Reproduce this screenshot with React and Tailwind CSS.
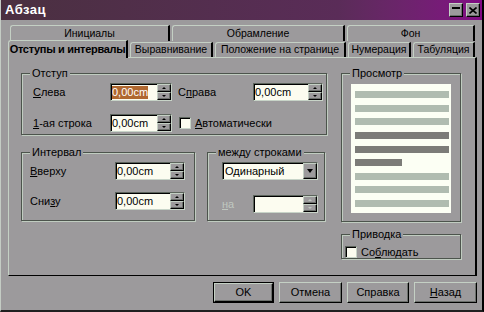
const raised =
  'border border-t-[#c4d0c4] border-l-[#c4d0c4] border-r-black border-b-black shadow-[inset_-1px_-1px_0_#6c706c]';
const sunken =
  'border border-t-[#5c645c] border-l-[#5c645c] border-r-[#c8d4c8] border-b-[#c8d4c8] shadow-[inset_1px_1px_0_#000]';

function Arrow({ up, disabled }) {
  const color = disabled ? 'border-b-[#c0c8c0] border-t-[#c0c8c0]' : 'border-b-black border-t-black';
  return up ? (
    <span className={`w-0 h-0 border-x-[2px] border-x-transparent border-b-[2px] ${color}`} />
  ) : (
    <span className={`w-0 h-0 border-x-[2px] border-x-transparent border-t-[2px] ${color}`} />
  );
}

function Spin({ className = '', value, selected, disabled }) {
  return (
    <div className={`flex h-[18px] bg-[#fcfcf0] ${sunken} ${className}`}>
      <div className="flex-1 flex items-center pl-[1px] overflow-hidden">
        {value && (
          <span className={selected ? 'bg-[#b06830] text-white leading-[13px]' : 'leading-[13px]'}>{value}</span>
        )}
      </div>
      <div className="w-[14px] flex flex-col">
        <div className={`h-[8px] bg-[#9c9a9c] flex items-center justify-center ${raised}`}>
          <Arrow up disabled={disabled} />
        </div>
        <div className={`h-[8px] bg-[#9c9a9c] flex items-center justify-center ${raised}`}>
          <Arrow disabled={disabled} />
        </div>
      </div>
    </div>
  );
}

function Check() {
  return <div className={`w-[12px] h-[12px] shrink-0 bg-[#fcfcf0] ${sunken}`} />;
}

function Group({ title, className = '', children }) {
  return (
    <div className={`relative border border-[#4c544c] shadow-[inset_1px_1px_0_#c0ccc0,1px_1px_0_#c0ccc0] ${className}`}>
      <span className="absolute -top-[8px] left-[8px] bg-[#9c9a9c] px-[2px] leading-[14px]">{title}</span>
      {children}
    </div>
  );
}

function Tab({ className = '', children, active }) {
  return (
    <div
      className={`flex items-center justify-center whitespace-nowrap overflow-hidden bg-[#9c9a9c] border-t border-l border-[#c4d0c4] border-r-2 border-r-black rounded-tl-[3px] ${className} ${
        active ? 'font-bold tracking-[-0.3px] relative z-10' : 'text-[10.5px]'
      }`}
    >
      {children}
    </div>
  );
}

function Button({ className = '', children, primary }) {
  return (
    <div className={`${primary ? 'border border-black' : ''} ${className}`}>
      <div className={`h-full flex items-center justify-center bg-[#9c9a9c] ${raised}`}>{children}</div>
    </div>
  );
}

const lines = [
  { mt: 7, dark: false, w: 94 },
  { mt: 7, dark: false, w: 94 },
  { mt: 6, dark: false, w: 94 },
  { mt: 7, dark: true, w: 94 },
  { mt: 7, dark: true, w: 94 },
  { mt: 6, dark: true, w: 47 },
  { mt: 7, dark: false, w: 94 },
  { mt: 6, dark: false, w: 94 },
  { mt: 7, dark: false, w: 94 },
];

export default function App() {
  return (
    <div className="w-[484px] h-[312px] bg-[#9c9a9c] border-l border-l-[#c4ccc4] border-r-2 border-r-black border-b-2 border-b-[#202020] flex flex-col font-['Liberation_Sans',Arial,sans-serif] text-[11px] text-black select-none">
      {/* title bar */}
      <div className="h-[20px] flex items-center bg-linear-to-r from-[#4a3040] via-[#5a2c58] via-70% to-[#820a84] pl-[4px] pr-[2px]">
        <span className="text-white font-bold text-[13px] tracking-[0.5px]">Абзац</span>
        <div className="ml-auto flex gap-[3px]">
          <div className={`w-[14px] h-[14px] bg-[#9c9a9c] flex justify-center pt-[3px] ${raised}`}>
            <span className="w-[8px] h-[2px] bg-black" />
          </div>
          <div className={`w-[14px] h-[14px] bg-[#9c9a9c] flex items-center justify-center ${raised}`}>
            <svg width="8" height="7" viewBox="0 0 8 7">
              <path d="M0.5 0.5L7.5 6.5M7.5 0.5L0.5 6.5" stroke="#000" strokeWidth="1.6" />
            </svg>
          </div>
        </div>
      </div>

      {/* tabs */}
      <div className="pt-[5px]">
        <div className="flex gap-[2px] pl-[9px] h-[16px]">
          <Tab className="w-[160px]">Инициалы</Tab>
          <Tab className="w-[173px]">Обрамление</Tab>
          <Tab className="w-[128px]">Фон</Tab>
        </div>
        <div className="flex items-start gap-[2px] pl-[7px] h-[16px]">
          <Tab active className="w-[120px] h-[18px] -mt-[1px]">Отступы и интервалы</Tab>
          <Tab className="w-[83px] h-[15px] mt-[1px]">Выравнивание</Tab>
          <Tab className="w-[131px] h-[15px] mt-[1px]">Положение на странице</Tab>
          <Tab className="w-[63px] h-[15px] mt-[1px]">Нумерация</Tab>
          <Tab className="w-[62px] h-[15px] mt-[1px]">Табуляция</Tab>
        </div>
      </div>

      {/* panel */}
      <div className="ml-[7px] w-[469px] h-[219px] border-t border-l border-[#c4d0c4] border-r-2 border-r-black border-b border-b-black flex pl-[12px] pt-[15px]">
        <div className="w-[306px] flex flex-col">
          <Group title="Отступ" className="h-[62px]">
            <div className="flex items-center mt-[9px] pl-[11px]">
              <span className="w-[77px]">
                <u>С</u>лева
              </span>
              <Spin className="w-[62px]" value="0,00cm" selected />
              <span className="w-[75px] ml-[6px]">
                С<u>п</u>рава
              </span>
              <Spin className="w-[70px]" value="0,00cm" />
            </div>
            <div className="flex items-center mt-[13px] pl-[11px]">
              <span className="w-[77px]">
                <u>1</u>-ая строка
              </span>
              <Spin className="w-[62px]" value="0,00cm" />
              <div className="ml-[7px]">
                <Check />
              </div>
              <span className="ml-[4px]">
                <u>А</u>втоматически
              </span>
            </div>
          </Group>

          <div className="flex mt-[17px] gap-[12px]">
            <Group title="Интервал" className="w-[174px] h-[69px]">
              <div className="flex items-center mt-[9px] pl-[8px]">
                <span className="w-[85px]">
                  <u>В</u>верху
                </span>
                <Spin className="w-[70px]" value="0,00cm" />
              </div>
              <div className="flex items-center mt-[12px] pl-[8px]">
                <span className="w-[85px]">
                  Сни<u>з</u>у
                </span>
                <Spin className="w-[70px]" value="0,00cm" />
              </div>
            </Group>
            <Group title="между строками" className="w-[118px] h-[69px]">
              <div className="ml-[14px] mt-[9px] w-[96px] h-[18px] flex bg-[#fcfcf0] border border-t-[#5c645c] border-l-[#5c645c] border-r-[#c8d4c8] border-b-[#c8d4c8] shadow-[inset_1px_1px_0_#000]">
                <span className="flex-1 flex items-center pl-[2px]">Одинарный</span>
                <div className={`w-[14px] bg-[#9c9a9c] flex items-center justify-center ${raised}`}>
                  <span className="w-0 h-0 border-x-[3.5px] border-x-transparent border-t-[4px] border-t-black" />
                </div>
              </div>
              <div className="flex items-center mt-[15px] pl-[14px]">
                <span className="w-[31px] text-[#c0c8c0]">
                  <u>н</u>а
                </span>
                <Spin className="w-[65px]" disabled />
              </div>
            </Group>
          </div>
        </div>

        <div className="w-[120px] ml-[14px] flex flex-col">
          <Group title="Просмотр" className="h-[149px]">
            <div className="ml-[9px] mt-[10px] w-[100px] h-[129px] bg-[#fcfff4] pl-[4px] flex flex-col">
              {lines.map((l, i) => (
                <div
                  key={i}
                  className={`h-[7px] ${l.dark ? 'bg-[#7c7c78]' : 'bg-[#b0bcb0]'} ${l.w === 47 ? 'w-[47px]' : 'w-[94px]'} ${
                    l.mt === 7 ? 'mt-[7px]' : 'mt-[6px]'
                  }`}
                />
              ))}
            </div>
          </Group>
          <Group title="Приводка" className="h-[25px] mt-[12px]">
            <div className="flex items-center mt-[9px] pl-[3px]">
              <Check />
              <span className="ml-[4px]">
                Со<u>б</u>людать
              </span>
            </div>
          </Group>
        </div>
      </div>

      {/* buttons */}
      <div className="flex justify-end gap-[5px] pr-[5px] mt-[6px]">
        <Button primary className="w-[61px] h-[21px]">OK</Button>
        <Button className="w-[63px] h-[21px]">Отмена</Button>
        <Button className="w-[62px] h-[21px]">Справка</Button>
        <Button className="w-[63px] h-[21px]">
          <span>
            <u>Н</u>азад
          </span>
        </Button>
      </div>
    </div>
  );
}
